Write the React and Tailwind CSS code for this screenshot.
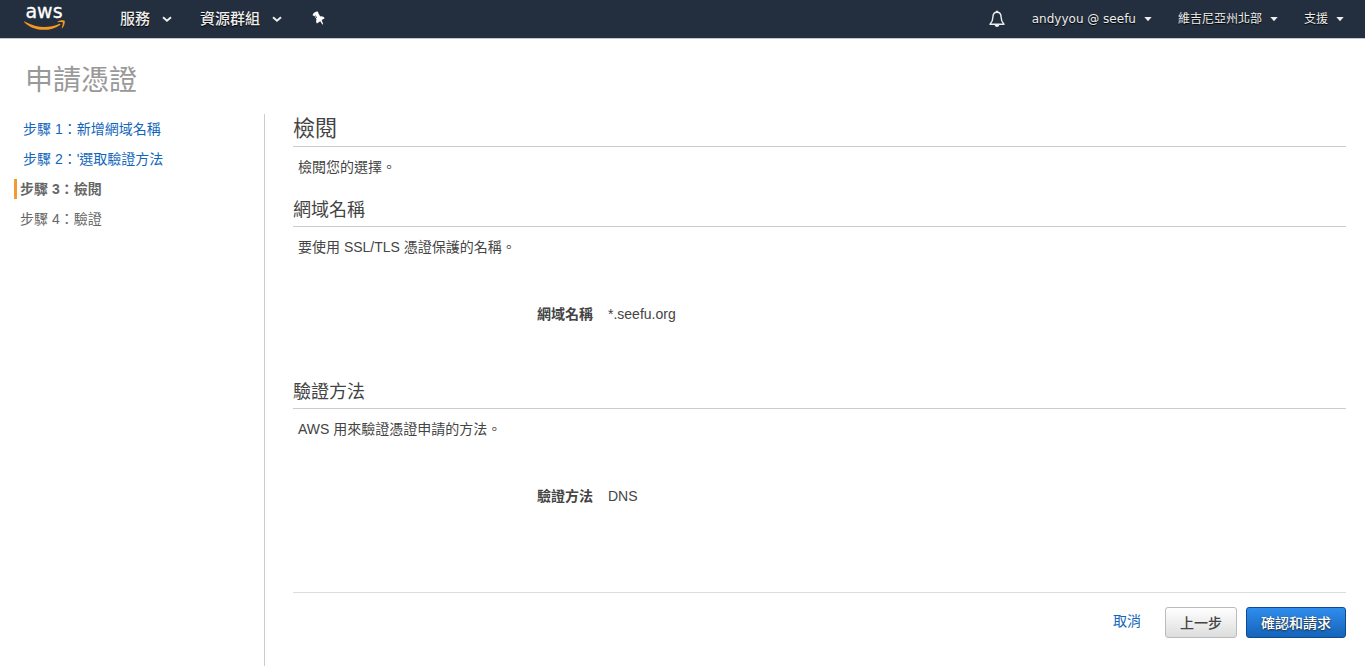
import React from "react";

const shadow = "[text-shadow:0_1px_1px_#000]";

function AwsLogo() {
  return (
    <a href="#home" aria-label="AWS" className="block shrink-0">
      <svg width="43" height="38" viewBox="0 0 43 38" className="block">
        <text
          x="20"
          y="18"
          textAnchor="middle"
          fill="#fff"
          stroke="#fff"
          strokeWidth=".3"
          className="font-['DejaVu_Sans',sans-serif] text-[19px]"
        >
          aws
        </text>
        <path d="M.2 22.200c-.4-.5.1-.9.8-.5C13 28.300 24.500 28.500 35.500 23.800c.9-.3 1.400.5.6 1.100C25.500 32.200 9.500 31.500.2 22.200z" fill="#f7981f" />
        <path d="M33.500 21.700c2.500-1.700 6.500-1.600 7.100-.9.600.8-.2 5.400-2.300 7.400-.4.300-.7.100-.6-.3.600-1.400 1.400-4.500 1.100-5.400-.6-.7-3.500-.4-5.100-.2-.4 0-.5-.3-.2-.6z" fill="#f7981f" />
      </svg>
    </a>
  );
}

function Chevron() {
  return (
    <svg width="10" height="7" viewBox="0 0 10 7" className="mt-px">
      <path d="M1 1.200L5 4.800L9 1.200" fill="none" stroke="#eee" strokeWidth="1.900" />
    </svg>
  );
}

function Caret() {
  return (
    <svg width="8" height="5" viewBox="0 0 8 5">
      <path d="M0.300 0H7.700L4 4.300Z" fill="#eee" />
    </svg>
  );
}

function Pin() {
  return (
    <svg width="16" height="16" viewBox="0 0 16 16" className="block">
      <path
        d="M2.500 4.300C3 2.300 5.500.5 7.900.6L8.500 2.500 10.300 5.400C12.200 5 13.900 5.800 14.700 7.300L11.700 9 13.200 13.200 12.400 13.500 10.200 10.200 6.900 12.500C5.900 11.200 6 9.500 6.500 8.200L4.700 5.300Z"
        fill="#fff"
      />
      <path d="M5.400 4.500L6.700 6.900" stroke="#232f3e" strokeWidth=".8" />
    </svg>
  );
}

function Bell() {
  return (
    <svg width="17" height="18" viewBox="0 0 17 18" className="block">
      <path
        d="M8 2.200C4.900 2.200 3.900 4.600 3.900 7.200C3.900 10.600 3 12 1 14.200H15C13 12 12.100 10.600 12.100 7.200C12.100 4.600 11.100 2.200 8 2.200Z"
        fill="none"
        stroke="#eee"
        strokeWidth="1.400"
        strokeLinejoin="round"
      />
      <path d="M6.900 2V.8h2.200V2zM5.700 15h4.600c-.2 1.300-1 2-2.300 2s-2.100-.7-2.300-2z" fill="#eee" />
    </svg>
  );
}

function Header() {
  return (
    <header className="flex h-[39px] items-center justify-between border-b border-[#c5c5cb] bg-[#232f3e] pl-6 pr-[21px] text-[#eee]">
      <div className="flex items-center">
        <AwsLogo />
        <nav className="ml-[53px] flex items-center gap-7 text-[15px] font-medium leading-5">
          <button type="button" className={`flex items-center gap-3 ${shadow}`}>
            服務
            <Chevron />
          </button>
          <button type="button" className={`flex items-center gap-3 ${shadow}`}>
            資源群組
            <Chevron />
          </button>
          <button type="button" aria-label="釘選捷徑">
            <Pin />
          </button>
        </nav>
      </div>
      <div className="flex items-center gap-[26px] font-['DejaVu_Sans','Noto_Sans_CJK_TC',sans-serif] text-[12px] leading-5">
        <button type="button" aria-label="通知">
          <Bell />
        </button>
        <button type="button" className={`flex items-center gap-2 ${shadow}`}>
          andyyou @ seefu
          <Caret />
        </button>
        <button type="button" className={`flex items-center gap-2 ${shadow}`}>
          維吉尼亞州北部
          <Caret />
        </button>
        <button type="button" className={`flex items-center gap-2 ${shadow}`}>
          支援
          <Caret />
        </button>
      </div>
    </header>
  );
}

function Steps() {
  return (
    <aside className="w-[265px] shrink-0 border-r border-[#ccc] pl-3.5">
      <ol>
        <li className="flex h-[30px] items-center pl-[9px]">
          <a href="#domain" className="text-[#1166bb]">步驟 1：新增網域名稱</a>
        </li>
        <li className="flex h-[30px] items-center pl-[9px]">
          <a href="#method" className="text-[#1166bb]">步驟 2：'選取驗證方法</a>
        </li>
        <li className="flex h-[30px] items-center" aria-current="step">
          <span className="border-l-[3px] border-[#f29a34] pl-[3px] font-bold text-[#666]">步驟 3：檢閱</span>
        </li>
        <li className="flex h-[30px] items-center pl-1.5 text-[#666]">步驟 4：驗證</li>
      </ol>
    </aside>
  );
}

function Section({ title, description, label, value }) {
  return (
    <section>
      <h3 className="flex h-10 items-center border-b border-[#ccc] pt-1.5 text-[18px] leading-6">{title}</h3>
      <p className="px-[5px] py-2.5">{description}</p>
      <dl className="mb-[45px] mt-[37px] flex gap-[15px]">
        <dt className="w-[300px] text-right font-bold">{label}</dt>
        <dd>{value}</dd>
      </dl>
    </section>
  );
}

export default function App() {
  return (
    <div
      lang="zh-TW"
      className="flex min-h-screen flex-col bg-white font-['Liberation_Sans','Noto_Sans_CJK_TC',sans-serif] text-[14px] leading-5 text-[#444]"
    >
      <Header />
      <h1 className="px-[25px] pb-[13px] pt-[22px] text-[28px] leading-10 text-[#999]">申請憑證</h1>
      <div className="flex flex-1">
        <Steps />
        <main className="min-w-0 flex-1 pl-7 pr-[19px]">
          <h2 className="flex h-[33px] items-center border-b border-[#ccc] pb-0.5 text-[22px] leading-7">檢閱</h2>
          <p className="px-[5px] py-2.5">檢閱您的選擇。</p>
          <Section title="網域名稱" description="要使用 SSL/TLS 憑證保護的名稱。" label="網域名稱" value="*.seefu.org" />
          <Section title="驗證方法" description="AWS 用來驗證憑證申請的方法。" label="驗證方法" value="DNS" />
          <footer className="mt-[86px] flex items-start justify-end border-t border-[#ddd] pt-3.5">
            <a href="#cancel" className="mr-6 mt-1 text-[#1166bb]">取消</a>
            <button
              type="button"
              className="mr-[9px] h-[31px] rounded-[3px] border border-[#bbb] bg-linear-to-b from-white to-[#ddd] px-3.5 font-medium"
            >
              上一步
            </button>
            <button
              type="button"
              className="h-[31px] rounded-[3px] border border-[#0d4a8f] bg-linear-to-b from-[#2f8ded] to-[#1464ba] px-3.5 font-medium text-white [text-shadow:0_1px_2px_#222]"
            >
              確認和請求
            </button>
          </footer>
        </main>
      </div>
    </div>
  );
}
